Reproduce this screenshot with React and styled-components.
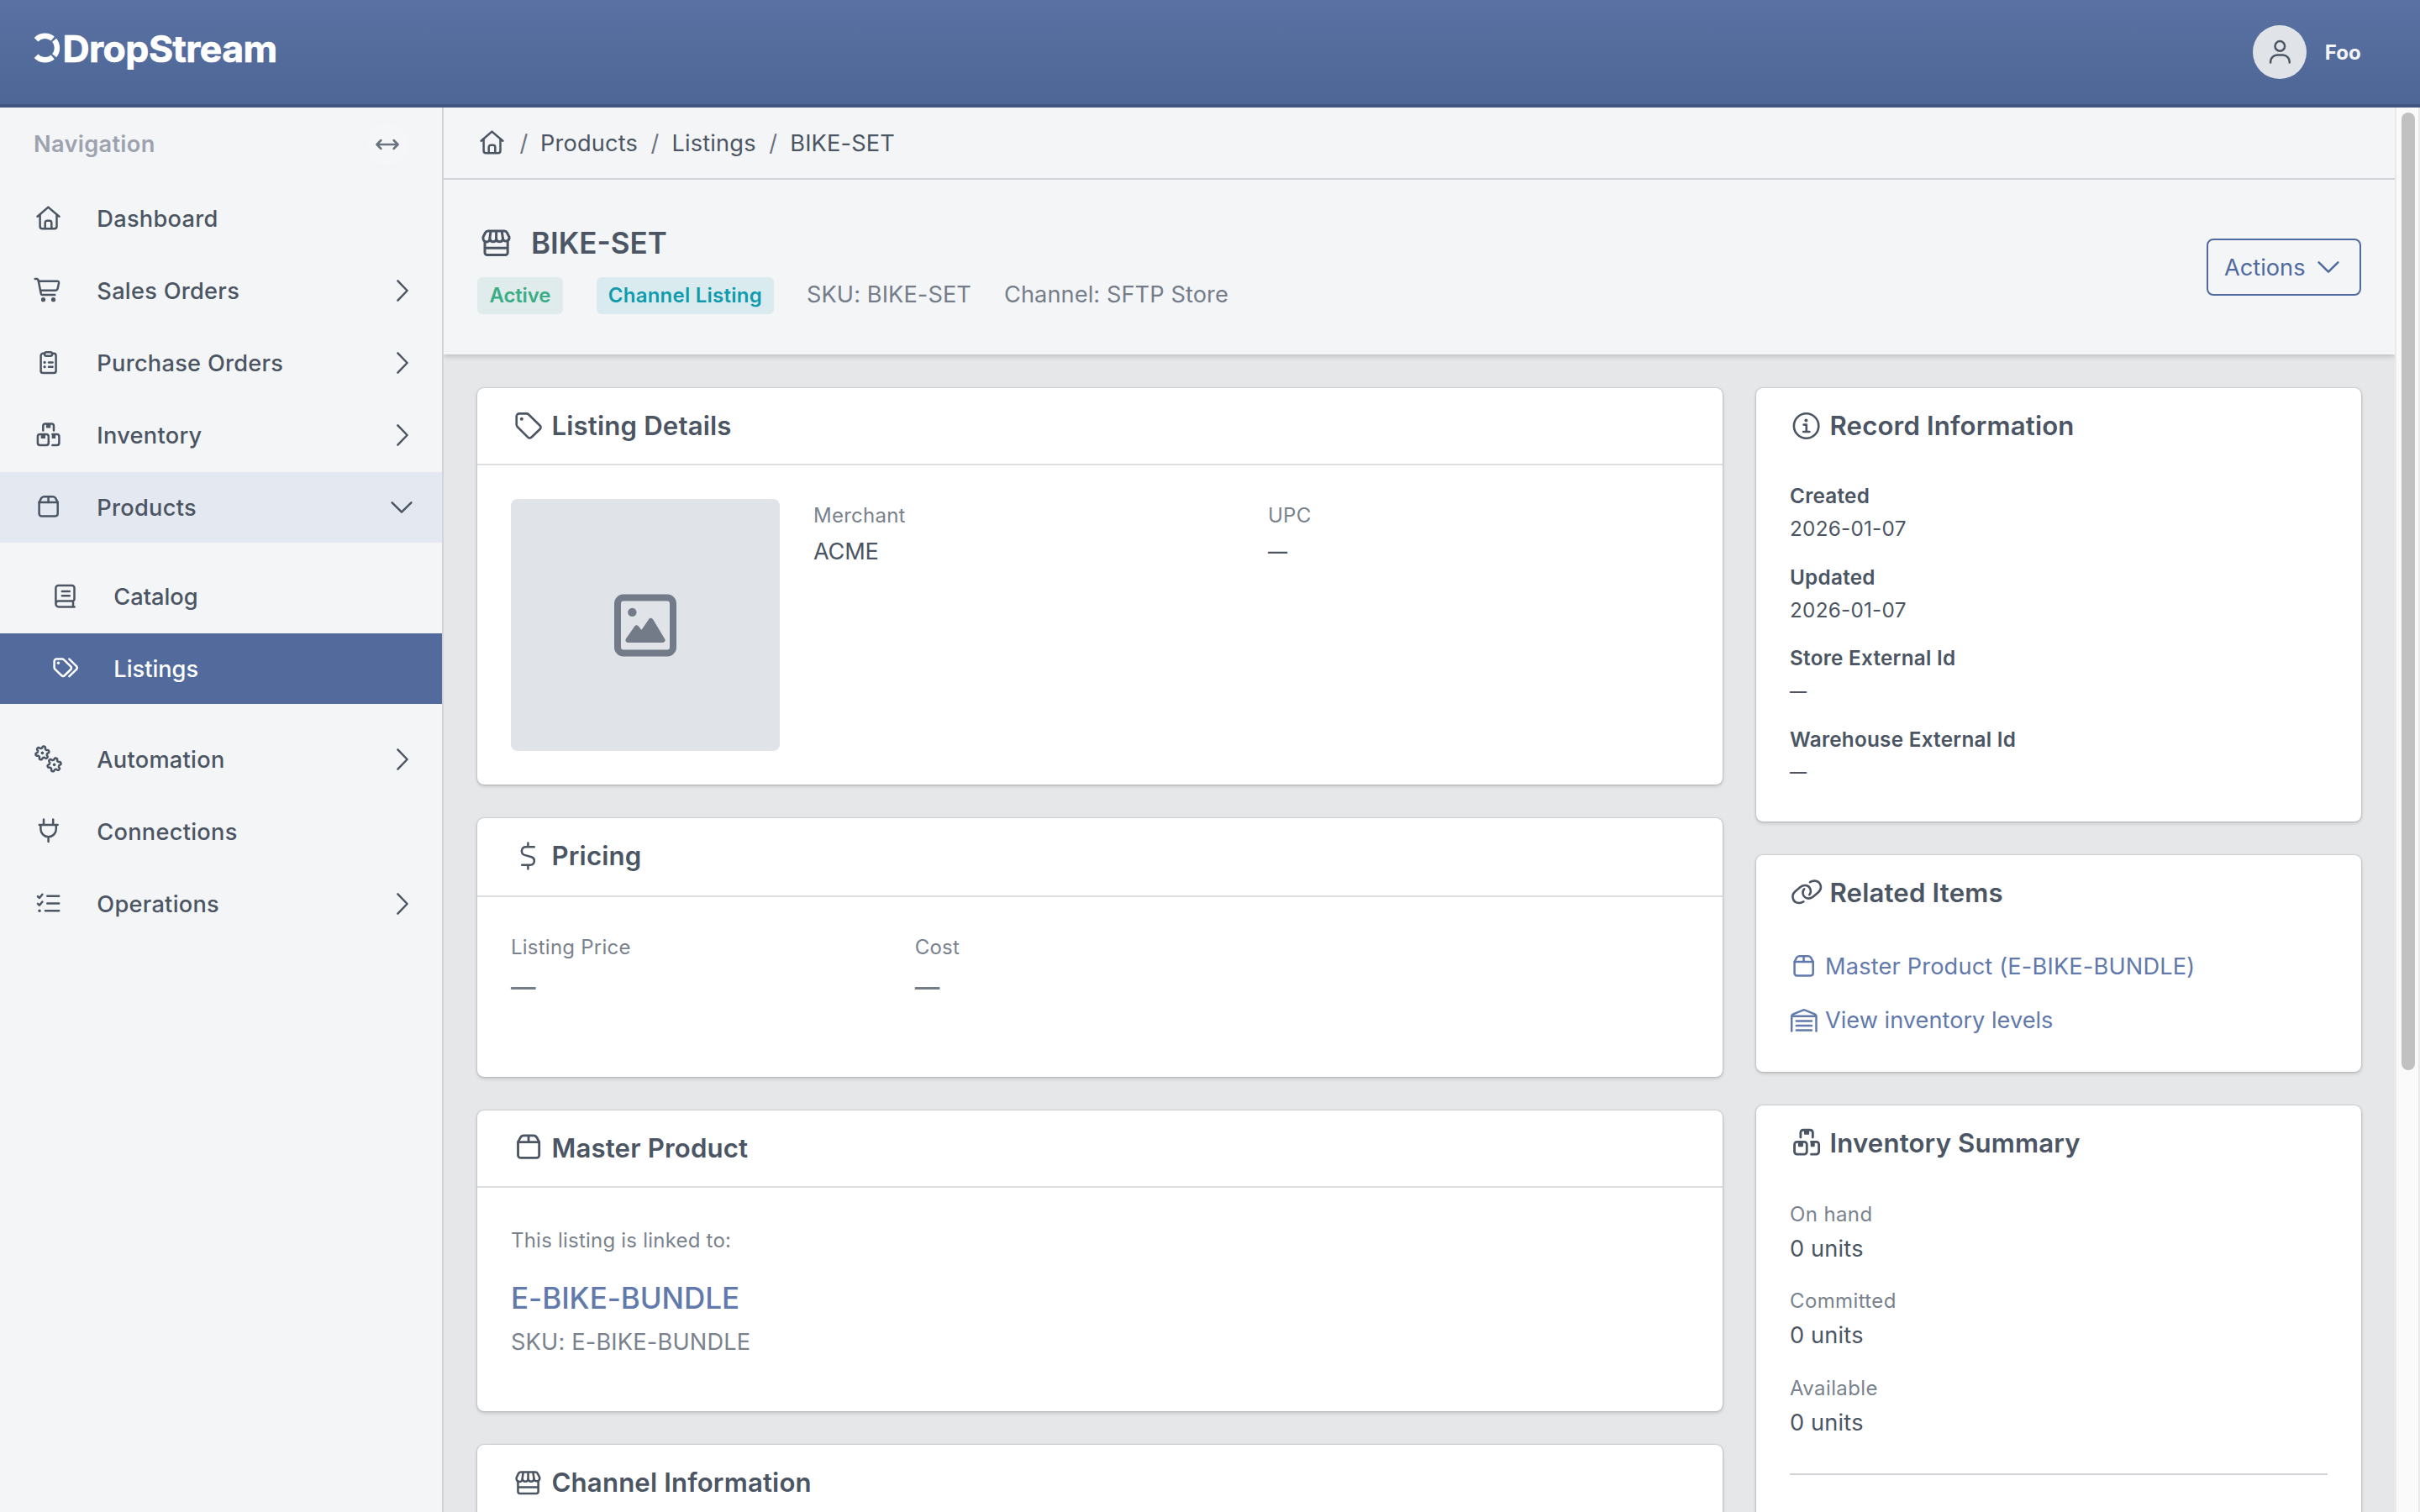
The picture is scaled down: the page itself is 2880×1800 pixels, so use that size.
import React from "react";
import styled, { createGlobalStyle } from "styled-components";

const GlobalStyle = createGlobalStyle`
  *, *::before, *::after { box-sizing: border-box; }
  html, body { margin: 0; overflow: hidden; }
  body {
    font-family: Inter, "Liberation Sans", sans-serif;
    font-size: 27.2px;
    letter-spacing: 0.006em;
    color: #4b5563;
    background: #e6e7e9;
  }
`;

/* ---------- icons ---------- */

const Svg = styled.svg`
  display: block;
  flex: none;
  overflow: visible;
  fill: none;
  stroke: currentColor;
  stroke-linecap: round;
  stroke-linejoin: round;
`;

const Icon = ({ size = 36, w = 36, h = 36, stroke = 2.5, children }) => (
  <Svg width={(size * w) / 36} height={(size * h) / 36} viewBox={`0 0 ${w} ${h}`} strokeWidth={stroke}>
    {children}
  </Svg>
);

const Dot = ({ x, y, r = 1.6 }) => <circle cx={x} cy={y} r={r} fill="currentColor" stroke="none" />;

const HomeIcon = (p) => (
  <Icon {...p}>
    <path d="M4.6 15.8 17.4 4.6 30.4 15.8" />
    <path d="M7.6 13.6V27.6a2.7 2.7 0 0 0 2.7 2.7H24.8a2.7 2.7 0 0 0 2.7-2.7V13.6" />
    <path d="M13.7 30V23.2a2.4 2.4 0 0 1 2.4-2.4H18.9a2.4 2.4 0 0 1 2.4 2.4V30" />
  </Icon>
);

const CartIcon = (p) => (
  <Icon {...p}>
    <path d="M1.7 4H3.9Q5.3 4 5.6 5.5L8.7 21.2Q9.1 23.1 11 23.1H25.3" />
    <path d="M5.9 6.7H28Q30.4 6.7 30 9L28.7 15.2Q28.2 17.7 25.6 17.7H8.2" />
    <Dot x={11.5} y={28.7} r={2.6} />
    <Dot x={23.5} y={28.7} r={2.6} />
  </Icon>
);

const ClipboardIcon = (p) => (
  <Icon {...p}>
    <path d="M12.6 6.8H11.2a2.6 2.6 0 0 0-2.6 2.6V27.4a2.6 2.6 0 0 0 2.6 2.6H24a2.6 2.6 0 0 0 2.6-2.6V9.4A2.6 2.6 0 0 0 24 6.8H22.6" />
    <rect x="13" y="5.2" width="9.2" height="4.6" rx="2.3" />
    <Dot x={13.1} y={17.4} />
    <Dot x={13.1} y={22.7} />
    <path d="M18 17.4H22.6M18 22.7H22.6" />
  </Icon>
);

const BoxesIcon = (p) => (
  <Icon {...p}>
    <path d="M11.3 12.4V7.2A2.6 2.6 0 0 1 13.9 4.6H21.4A2.6 2.6 0 0 1 24 7.2V12.4" />
    <rect x="4.9" y="17" width="12.9" height="13" rx="2.7" />
    <path d="M22.4 17H27.7A2.7 2.7 0 0 1 30.4 19.7V27.3A2.7 2.7 0 0 1 27.7 30H22.4" />
    <path d="M15.6 5V8.7H19.6V5ZM9.4 17.4V21.4H13.3V17.4ZM22.4 17.4V21.4H25.4V17.4Z" fill="currentColor" strokeWidth="1.4" />
  </Icon>
);

const BoxIcon = (p) => (
  <Icon {...p}>
    <path d="M6.6 12V25.6A2.8 2.8 0 0 0 9.4 28.4H25.9A2.8 2.8 0 0 0 28.7 25.6V12Z" />
    <path d="M6.6 12 9.1 7.2Q10.2 5.2 12.4 5.2H22.9Q25.1 5.2 26.2 7.2L28.7 12M17.6 5.2V12" />
  </Icon>
);

const BookIcon = (p) => (
  <Icon {...p}>
    <path d="M6.4 27V8A3 3 0 0 1 9.4 5H25.8A2.7 2.7 0 0 1 28.5 7.7V21.2A2.4 2.4 0 0 1 26.1 23.6H9.7A3.3 3.3 0 0 0 6.4 27 3.4 3.4 0 0 0 9.8 30.4H28.6M27 23.6V30.2" />
    <path d="M13.8 12H22.8M13.8 17.2H22.8" />
  </Icon>
);

const TagsIcon = (p) => (
  <Icon {...p}>
    <path d="M4.6 9.2A2.7 2.7 0 0 1 7.3 6.5H13.9A3 3 0 0 1 16 7.4L24.2 15.3A2.6 2.6 0 0 1 24.2 19L17 26A2.8 2.8 0 0 1 13.1 26L5.4 18.6A2.7 2.7 0 0 1 4.6 16.7Z" />
    <path d="M22.4 6.6 31 15.1A2.6 2.6 0 0 1 31 18.8L22.4 27.2" />
    <Dot x={9.4} y={11.3} r={1.7} />
  </Icon>
);

const gearPath = (cx, cy, tilt) => {
  const pts = [];
  for (let i = 0; i < 96; i += 1) {
    const a = (i / 96) * Math.PI * 2;
    const r = 6.9 + 1.25 * Math.tanh(2 * Math.cos(6 * a + tilt));
    pts.push(`${(cx + r * Math.cos(a)).toFixed(2)} ${(cy + r * Math.sin(a)).toFixed(2)}`);
  }
  return `M${pts.join("L")}Z`;
};

const GearsIcon = (p) => (
  <Icon {...p}>
    <path d={gearPath(10.4, 10.4, 1.5)} />
    <path d={gearPath(24.6, 24.4, 1.5)} />
    <Dot x={10.4} y={10.4} r={1.8} />
    <Dot x={24.6} y={24.4} r={1.8} />
  </Icon>
);

const PlugIcon = (p) => (
  <Icon {...p}>
    <path d="M12 3.6V9.8M23.2 3.6V9.8M6.8 10H28.6M8.4 10V15A9.2 9.2 0 0 0 26.8 15V10M17.6 24.4V30" />
  </Icon>
);

const TasksIcon = (p) => (
  <Icon {...p}>
    <path d="M5 9.2 7 11 10.4 6.8M5 17.9 7 19.7 10.4 15.5M16.3 8.7H30.2M16.3 17.4H30.2M14 26.3H30.2" />
    <Dot x={7} y={26.3} r={1.7} />
  </Icon>
);

const StoreIcon = (p) => (
  <Icon w={38} {...p}>
    <path d="M8.9 4H28.2Q30.4 4 31.4 6L34 11.2V12.4A3.9 3.9 0 0 1 26.4 13.4 3.9 3.9 0 0 1 18.7 13.4 3.9 3.9 0 0 1 11 13.4 3.9 3.9 0 0 1 3 12.4V11.2L5.6 6Q6.6 4 8.9 4Z" />
    <path d="M12 4.4 10.8 13M18.6 4.4V13M25.2 4.4 26.5 13" />
    <path d="M5 16.4V29.8A2.8 2.8 0 0 0 7.8 32.6H29.4A2.8 2.8 0 0 0 32.2 29.8V16.4M5 24.2H32.2" />
  </Icon>
);

const TagIcon = (p) => (
  <Icon {...p}>
    <path d="M3.7 6.5A3.1 3.1 0 0 1 6.8 3.4H15.6A3.6 3.6 0 0 1 18.2 4.5L31.7 17.8A2.8 2.8 0 0 1 31.7 21.8L21.3 31.7A2.8 2.8 0 0 1 17.3 31.7L4.7 19A3.4 3.4 0 0 1 3.7 16.5Z" />
    <Dot x={9.8} y={9.8} r={2} />
  </Icon>
);

const DollarIcon = (p) => (
  <Icon {...p}>
    <path d="M17.4 2.6V7M17.4 28.8V33.4M24.8 7.2H14.8A5 5 0 0 0 13.2 16.9L21.6 19.3A4.9 4.9 0 0 1 20.2 28.8H10.2" />
  </Icon>
);

const InfoIcon = (p) => (
  <Icon {...p}>
    <circle cx="17.6" cy="18" r="14.7" />
    <path d="M14.6 16.6H17.8V25M14.2 25H21.4" />
    <Dot x={17.4} y={11.4} r={2} />
  </Icon>
);

const LinkIcon = (p) => {
  const half = "M15.4 29.4C11 32.2 5.4 31.2 3.3 27.1 1.6 23.6 2.6 19.8 5.7 17.1L11.6 12.1C15.6 8.7 21 9.6 23.1 13.6 24.2 16 24 19 22.3 21.2";
  return (
    <Icon w={38} {...p}>
      <path d={half} />
      <path d={half} transform="rotate(180 19.2 17.8)" />
    </Icon>
  );
};

const WarehouseIcon = (p) => (
  <Icon {...p}>
    <path d="M3.2 30.6V12.9Q3.2 11 5 10.3L16.6 5.6Q17.9 5.1 19.2 5.6L30.8 10.3Q32.5 11 32.5 12.9V30.6M3.2 12.7H32.5" />
    <path d="M8.8 18.6H27M8.8 24H27M8.8 29.4H27" />
  </Icon>
);

const UserIcon = () => (
  <Icon>
    <circle cx="18.3" cy="10.9" r="5.8" />
    <path d="M7.1 30.4V29.6A8 8 0 0 1 15.1 21.6H21.7A8 8 0 0 1 29.7 29.6V30.4" />
  </Icon>
);

const ExpandIcon = () => (
  <Icon w={30} h={16}>
    <path d="M2.8 8H27.2M7.4 3 2.4 8 7.4 13M22.6 3 27.6 8 22.6 13" />
  </Icon>
);

const ChevronRight = () => (
  <Icon w={14} h={26}>
    <path d="M1.4 1.4 12.6 13 1.4 24.6" />
  </Icon>
);

const ChevronDown = () => (
  <Icon w={26} h={14}>
    <path d="M1.6 1.4 13 12.6 24.4 1.4" />
  </Icon>
);

const ImageIcon = () => (
  <Svg width="74" height="74" viewBox="0 0 74 74" strokeWidth="8">
    <rect x="4" y="4.5" width="66" height="66" rx="7" />
    <circle cx="21.4" cy="21.9" r="5.2" fill="currentColor" stroke="none" />
    <path d="M16.5 55 26.6 40.5 32.6 47.9 43.6 32 57.5 55Z" fill="currentColor" strokeWidth="6" />
  </Svg>
);

const LogoRing = () => (
  <Svg width="32" height="40" viewBox="0 0 32 40" strokeWidth="6.4">
    <g strokeLinecap="butt">
      <path d="M1 9.3A14.6 14.6 0 0 1 20.8 8" />
      <path d="M22.6 9.7A14.6 14.6 0 0 1 22.6 28.3" />
      <path d="M20.8 30A14.6 14.6 0 0 1 1 28.7" />
    </g>
  </Svg>
);

/* ---------- shell ---------- */

const Page = styled.div`
  display: flex;
  flex-direction: column;
  width: 2880px;
  height: 1800px;
  overflow: hidden;
`;

const TopBar = styled.header`
  display: flex;
  flex: none;
  align-items: center;
  justify-content: space-between;
  height: 128px;
  padding: 0 70px 0 42px;
  color: #fff;
  background: linear-gradient(#5a72a3, #4e6695);
  border-bottom: 4px solid #405680;
`;

const Logo = styled.div`
  display: flex;
  align-items: center;
  height: 40px;
  margin-bottom: 8px;
  font-size: 44.5px;
  font-weight: 700;
  letter-spacing: -0.012em;
  -webkit-text-stroke: 0.7px #fff;

  span { margin-left: 0.5px; line-height: 40px; }
`;

const Account = styled.div`
  display: flex;
  align-items: center;
  gap: 21.5px;
  font-size: 24px;
  font-weight: 700;
  color: #f3f4f6;
`;

const Avatar = styled.div`
  display: grid;
  place-items: center;
  width: 64px;
  height: 64px;
  color: #4b5563;
  background: #e0e3e8;
  border-radius: 50%;
`;

const Body = styled.div`
  display: flex;
  flex: 1;
  min-height: 0;
`;

const Sidebar = styled.nav`
  display: flex;
  flex: none;
  flex-direction: column;
  width: 528px;
  background: #f4f5f7;
  border-right: 2px solid #d1d5db;
`;

const SidebarTitle = styled.div`
  display: flex;
  align-items: center;
  justify-content: space-between;
  height: 86px;
  margin-bottom: 4px;
  padding: 1px 40px 0 40px;
  font-weight: 600;
  letter-spacing: 0.012em;
  color: #9ca3af;
`;

const Toggle = styled.div`
  display: grid;
  place-items: center;
  width: 50px;
  height: 50px;
  color: #6b7280;
  background: #f5f6f8;
  border-radius: 50%;
`;

const NavList = styled.div`
  display: flex;
  flex-direction: column;
  gap: 2px;
`;

const SubNav = styled(NavList)`
  margin: 22px 0 24px;
`;

const NavRow = styled.a`
  display: flex;
  align-items: center;
  height: 84px;
  padding: 0 ${(p) => (p.$open ? 35.5 : 40)}px 0 ${(p) => (p.$sub ? 60 : 40)}px;
  font-weight: 500;
  letter-spacing: ${(p) => (p.$sub ? 0 : 0.01)}em;
  color: ${(p) => (p.$active ? "#fff" : "#4b5563")};
  background: ${(p) => (p.$active ? "#536b9c" : p.$open ? "#e3e8f1" : "transparent")};
`;

const NavLabel = styled.span`
  flex: 1;
  margin-left: 39.3px;
`;

const Content = styled.main`
  display: flex;
  flex: 1;
  flex-direction: column;
  min-width: 0;
`;

const Scrollbar = styled.div`
  flex: none;
  width: 30px;
  padding: 6px 4px 0 6px;
  background: #fafafa;
  border: solid #e9e9e9;
  border-width: 0 2px;
`;

const Thumb = styled.div`
  width: 16px;
  height: 1140px;
  background: #c1c1c1;
  border-radius: 8px;
`;

/* ---------- page header ---------- */

const Breadcrumbs = styled.div`
  display: flex;
  flex: none;
  align-items: center;
  height: 86px;
  padding-left: 40px;
  background: #f4f5f7;
  border-bottom: 2px solid #d1d5db;
`;

const Slash = styled.span`
  width: ${(p) => (p.$first ? 39 : 40.5)}px;
  padding-left: ${(p) => (p.$first ? 14.5 : 15.5)}px;
  color: #6b7280;
`;

const PageHeader = styled.div`
  display: flex;
  flex: none;
  align-items: center;
  justify-content: space-between;
  height: 208px;
  padding: 3px 40px 0;
  background: #f4f5f7;
  box-shadow: 0 2px 6px rgba(0, 0, 0, 0.2);
  clip-path: inset(0 0 -12px 0);
`;

const Title = styled.h1`
  display: flex;
  align-items: center;
  gap: 22px;
  height: 48px;
  margin: 0 0 17px;
  padding-left: 4px;
  font-size: 35px;
  font-weight: 600;
  letter-spacing: 0;
`;

const MetaRow = styled.div`
  display: flex;
  align-items: center;
  gap: 40px;
  height: 44px;
  line-height: 44px;
  color: #757d8a;
`;

const Badge = styled.span`
  height: 44px;
  padding: 0 ${(p) => p.$pad || 14}px;
  line-height: 43px;
  font-size: 24px;
  font-weight: 600;
  letter-spacing: ${(p) => p.$tracking || "0.01em"};
  color: ${(p) => p.$fg};
  background: ${(p) => p.$bg};
  border-radius: 6px;
`;

const MetaText = styled.span`
  margin-left: -1px;
  letter-spacing: 0.003em;
  line-height: 41px;
  height: 44px;
`;

const ActionsButton = styled.button`
  display: flex;
  align-items: center;
  gap: 15px;
  width: 184px;
  height: 68px;
  margin-top: -3px;
  padding: 0 0 0 19px;
  font: inherit;
  letter-spacing: 0;
  color: #4f6a9f;
  background: transparent;
  border: 2px solid #4f6a9f;
  border-radius: 8px;
`;

/* ---------- cards ---------- */

const Columns = styled.div`
  display: grid;
  flex: 1;
  grid-template-columns: 1482px 720px;
  gap: 40px;
  align-items: start;
  min-height: 0;
  padding: 40px;
`;

const Stack = styled.div`
  display: flex;
  flex-direction: column;
  gap: 40px;
`;

const Card = styled.section`
  background: #fff;
  border-radius: 8px;
  box-shadow: 0 0 2px rgba(0, 0, 0, 0.3), 0 2px 4px rgba(0, 0, 0, 0.16);
`;

const CardHeader = styled.h2`
  display: flex;
  gap: ${(p) => (p.$line ? 6.5 : 8.5)}px;
  height: ${(p) => (p.$line ? (p.$tall ? 94 : 92) : 90)}px;
  margin: 0;
  padding: 0 40px;
  font-size: 31.2px;
  font-weight: 600;
  letter-spacing: 0.0045em;
  line-height: 90px;
  border-bottom: ${(p) => (p.$line ? "2px solid #dcdee0" : "0")};
`;

const HeaderIcon = styled.span`
  display: grid;
  place-items: center;
  width: ${(p) => (p.$line ? 42 : 39)}px;
  height: 89px;
`;

const CardBody = styled.div`
  padding: ${(p) => p.$pad || "40px"};
`;

const DetailsRow = styled.div`
  display: flex;
  gap: 40px;
`;

const ImagePlaceholder = styled.div`
  display: grid;
  flex: none;
  place-items: center;
  width: 320px;
  height: 300px;
  color: #727b87;
  background: #e0e3e8;
  border-radius: 8px;
`;

const FieldGrid = styled.div`
  display: grid;
  flex: 1;
  grid-template-columns: repeat(${(p) => p.$cols}, 1fr);
  align-content: start;
  gap: 40px;
  padding-top: 1px;
`;

const FieldLabel = styled.div`
  line-height: 38px;
  font-size: 24px;
  letter-spacing: 0.01em;
  color: #7a828d;
`;

const FieldValue = styled.div`
  margin-top: 4px;
  line-height: 40px;
  letter-spacing: -0.01em;
`;

const PriceValue = styled.div`
  height: 92px;
  margin-top: 4px;
  line-height: 46px;
  font-size: 29.5px;
  font-weight: 600;
  color: #757d89;
`;

const Dash = styled.span`
  position: relative;
  top: -1.5px;
  font-size: ${(p) => p.$size || 23}px;
  font-weight: 500;
`;

const LinkedNote = styled.p`
  margin: 0;
  font-size: 24px;
  line-height: 46px;
  letter-spacing: 0.009em;
  color: #7a828d;
`;

const ProductLink = styled.a`
  display: block;
  margin-top: 20px;
  font-size: 35px;
  font-weight: 500;
  line-height: 50px;
  letter-spacing: -0.0014em;
  color: #6179ab;
`;

const ProductSku = styled.div`
  line-height: 56px;
  color: #7a828d;
`;

const RecordList = styled.dl`
  display: flex;
  flex-direction: column;
  gap: 18.6px;
  margin: 0;
  font-size: 24.3px;
  line-height: 39px;
  letter-spacing: 0.01em;

  dt { font-weight: 600; }
  dd { margin: 0; height: 39px; }
`;

const RelatedLink = styled.a`
  display: flex;
  align-items: center;
  gap: 7px;
  height: 64px;
  letter-spacing: ${(p) => p.$tracking || 0}em;
  color: #6179ab;

  svg { margin-left: -1px; }
`;

const StockList = styled.div`
  display: flex;
  flex-direction: column;
  gap: 21.3px;
  padding-bottom: 39.4px;
  border-bottom: 2px solid #d1d3d6;
`;

const StockLabel = styled.div`
  font-size: 24px;
  line-height: 40px;
  letter-spacing: 0.016em;
  color: #7a828d;
`;

const StockValue = styled.div`
  line-height: 42px;
  letter-spacing: 0.006em;
`;

/* ---------- data ---------- */

const NAV_TOP = [
  { label: "Dashboard", icon: HomeIcon },
  { label: "Sales Orders", icon: CartIcon, menu: true },
  { label: "Purchase Orders", icon: ClipboardIcon, menu: true },
  { label: "Inventory", icon: BoxesIcon, menu: true },
  { label: "Products", icon: BoxIcon, open: true },
];
const NAV_SUB = [
  { label: "Catalog", icon: BookIcon },
  { label: "Listings", icon: TagsIcon, active: true },
];
const NAV_BOTTOM = [
  { label: "Automation", icon: GearsIcon, menu: true },
  { label: "Connections", icon: PlugIcon },
  { label: "Operations", icon: TasksIcon, menu: true },
];
const RECORD = [
  ["Created", "2026-01-07"],
  ["Updated", "2026-01-07"],
  ["Store External Id", null],
  ["Warehouse External Id", null],
];
const STOCK = [
  ["On hand", "0 units"],
  ["Committed", "0 units"],
  ["Available", "0 units"],
];

const NavItem = ({ item, sub }) => (
  <NavRow $sub={sub} $open={item.open} $active={item.active}>
    <item.icon />
    <NavLabel>{item.label}</NavLabel>
    {item.menu && <ChevronRight />}
    {item.open && <ChevronDown />}
  </NavRow>
);

const CardTitle = ({ icon, line, tall, children }) => (
  <CardHeader $line={line} $tall={tall}>
    <HeaderIcon $line={line}>{icon}</HeaderIcon>
    {children}
  </CardHeader>
);

export default function App() {
  return (
    <Page>
      <GlobalStyle />
      <TopBar>
        <Logo>
          <LogoRing />
          <span>DropStream</span>
        </Logo>
        <Account>
          <Avatar><UserIcon /></Avatar>
          Foo
        </Account>
      </TopBar>
      <Body>
        <Sidebar>
          <SidebarTitle>
            Navigation
            <Toggle><ExpandIcon /></Toggle>
          </SidebarTitle>
          <NavList>{NAV_TOP.map((n) => <NavItem key={n.label} item={n} />)}</NavList>
          <SubNav>{NAV_SUB.map((n) => <NavItem key={n.label} item={n} sub />)}</SubNav>
          <NavList>{NAV_BOTTOM.map((n) => <NavItem key={n.label} item={n} />)}</NavList>
        </Sidebar>
        <Content>
          <Breadcrumbs>
            <HomeIcon />
            <Slash $first>/</Slash>Products
            <Slash>/</Slash>Listings
            <Slash>/</Slash>BIKE-SET
          </Breadcrumbs>
          <PageHeader>
            <div>
              <Title><StoreIcon stroke={3} />BIKE-SET</Title>
              <MetaRow>
                <Badge $fg="#3aac86" $bg="#e0eceb" $tracking="-0.006em" $pad={14.5}>Active</Badge>
                <Badge $fg="#0f9bad" $bg="#d9ebee">Channel Listing</Badge>
                <MetaText>SKU: BIKE-SET</MetaText>
                <MetaText>Channel: SFTP Store</MetaText>
              </MetaRow>
            </div>
            <ActionsButton>Actions<ChevronDown /></ActionsButton>
          </PageHeader>
          <Columns>
            <Stack>
              <Card>
                <CardTitle line icon={<TagIcon stroke={2.6} />}>Listing Details</CardTitle>
                <CardBody>
                  <DetailsRow>
                    <ImagePlaceholder><ImageIcon /></ImagePlaceholder>
                    <FieldGrid $cols={2}>
                      <div>
                        <FieldLabel>Merchant</FieldLabel>
                        <FieldValue>ACME</FieldValue>
                      </div>
                      <div>
                        <FieldLabel>UPC</FieldLabel>
                        <FieldValue><Dash>—</Dash></FieldValue>
                      </div>
                    </FieldGrid>
                  </DetailsRow>
                </CardBody>
              </Card>
              <Card>
                <CardTitle line tall icon={<DollarIcon />}>Pricing</CardTitle>
                <CardBody $pad="40px 40px 39px">
                  <FieldGrid $cols={3}>
                    <div>
                      <FieldLabel>Listing Price</FieldLabel>
                      <PriceValue>—</PriceValue>
                    </div>
                    <div>
                      <FieldLabel>Cost</FieldLabel>
                      <PriceValue>—</PriceValue>
                    </div>
                  </FieldGrid>
                </CardBody>
              </Card>
              <Card>
                <CardTitle line icon={<BoxIcon size={41} />}>Master Product</CardTitle>
                <CardBody $pad="40px 40px 54px">
                  <LinkedNote>This listing is linked to:</LinkedNote>
                  <ProductLink>E-BIKE-BUNDLE</ProductLink>
                  <ProductSku>SKU: E-BIKE-BUNDLE</ProductSku>
                </CardBody>
              </Card>
              <Card>
                <CardTitle line icon={<StoreIcon size={32} stroke={2.9} />}>Channel Information</CardTitle>
                <CardBody />
              </Card>
            </Stack>
            <Stack>
              <Card>
                <CardTitle icon={<InfoIcon stroke={2.6} />}>Record Information</CardTitle>
                <CardBody $pad="19px 40px 39.2px">
                  <RecordList>
                    {RECORD.map(([label, value]) => (
                      <div key={label}>
                        <dt>{label}</dt>
                        <dd>{value || <Dash $size={20}>—</Dash>}</dd>
                      </div>
                    ))}
                  </RecordList>
                </CardBody>
              </Card>
              <Card>
                <CardTitle icon={<LinkIcon stroke={2.6} />}>Related Items</CardTitle>
                <CardBody $pad="11px 40px 29px">
                  <RelatedLink $tracking={0.006}><BoxIcon />Master Product (E-BIKE-BUNDLE)</RelatedLink>
                  <RelatedLink><WarehouseIcon />View inventory levels</RelatedLink>
                </CardBody>
              </Card>
              <Card>
                <CardTitle icon={<BoxesIcon size={41} />}>Inventory Summary</CardTitle>
                <CardBody $pad="20px 40px 120px">
                  <StockList>
                    {STOCK.map(([label, value]) => (
                      <div key={label}>
                        <StockLabel>{label}</StockLabel>
                        <StockValue>{value}</StockValue>
                      </div>
                    ))}
                  </StockList>
                </CardBody>
              </Card>
            </Stack>
          </Columns>
        </Content>
        <Scrollbar><Thumb /></Scrollbar>
      </Body>
    </Page>
  );
}
